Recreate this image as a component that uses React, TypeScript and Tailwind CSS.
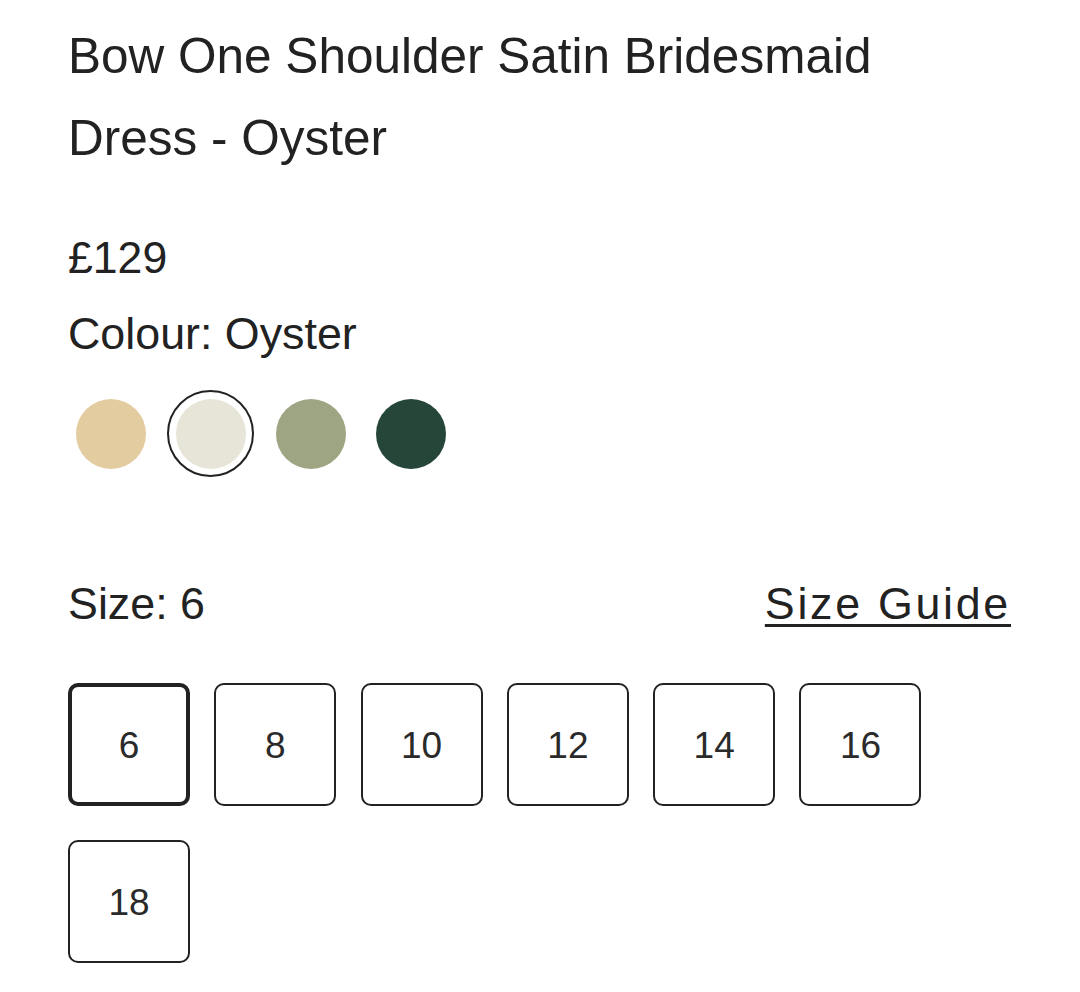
import React, { useState } from "react";

const swatches = [
  { name: "Champagne", color: "#e3cca0" },
  { name: "Oyster", color: "#e7e4d8" },
  { name: "Sage", color: "#9ea583" },
  { name: "Bottle Green", color: "#26463a" },
];

const sizes = ["6", "8", "10", "12", "14", "16", "18"];

export default function App() {
  const [colour, setColour] = useState("Oyster");
  const [size, setSize] = useState("6");

  return (
    <div
      className="min-h-[992px] w-[1080px] bg-white pl-[68px] pr-[69px] pt-[15px] text-[#222222]"
      style={{ fontFamily: '"Liberation Sans", Arial, Helvetica, sans-serif' }}
    >
      <h1 className="text-[49.5px] font-normal leading-[82px]">
        Bow One Shoulder Satin Bridesmaid
        <br />
        Dress - Oyster
      </h1>

      <p className="mt-[49px] text-[44.6px] leading-[60px]">£129</p>

      <p className="mt-[15px] text-[44.8px] leading-[60px]">Colour: {colour}</p>

      <div className="-ml-[1px] mt-[27px] flex gap-[13px]">
        {swatches.map((s) => {
          const active = s.name === colour;
          return (
            <button
              key={s.name}
              onClick={() => setColour(s.name)}
              aria-label={s.name}
              className={
                active
                  ? "flex h-[87px] w-[87px] items-center justify-center rounded-full border-2 border-[#222222]"
                  : "flex h-[87px] w-[87px] items-center justify-center rounded-full border-2 border-transparent"
              }
            >
              <span
                className="block h-[70px] w-[70px] rounded-full"
                style={{ backgroundColor: s.color }}
              />
            </button>
          );
        })}
      </div>

      <div className="mt-[96px] flex items-center justify-between text-[44.8px] leading-[60px]">
        <span>Size: {size}</span>
        <a
          href="#"
          className="tracking-[2.7px] underline decoration-[3px] underline-offset-[5px]"
        >
          Size Guide
        </a>
      </div>

      <div className="mt-[50px] flex flex-wrap gap-x-[24.3px] gap-y-[34px]">
        {sizes.map((s) => {
          const active = s === size;
          return (
            <button
              key={s}
              onClick={() => setSize(s)}
              className={
                active
                  ? "flex h-[123px] w-[122px] items-center justify-center rounded-[10px] border-4 border-[#222222] pt-[2px] text-[37px] text-[#2a2a2a]"
                  : "flex h-[123px] w-[122px] items-center justify-center rounded-[10px] border-2 border-[#222222] pt-[2px] text-[37px] text-[#2a2a2a]"
              }
            >
              {s}
            </button>
          );
        })}
      </div>
    </div>
  );
}
